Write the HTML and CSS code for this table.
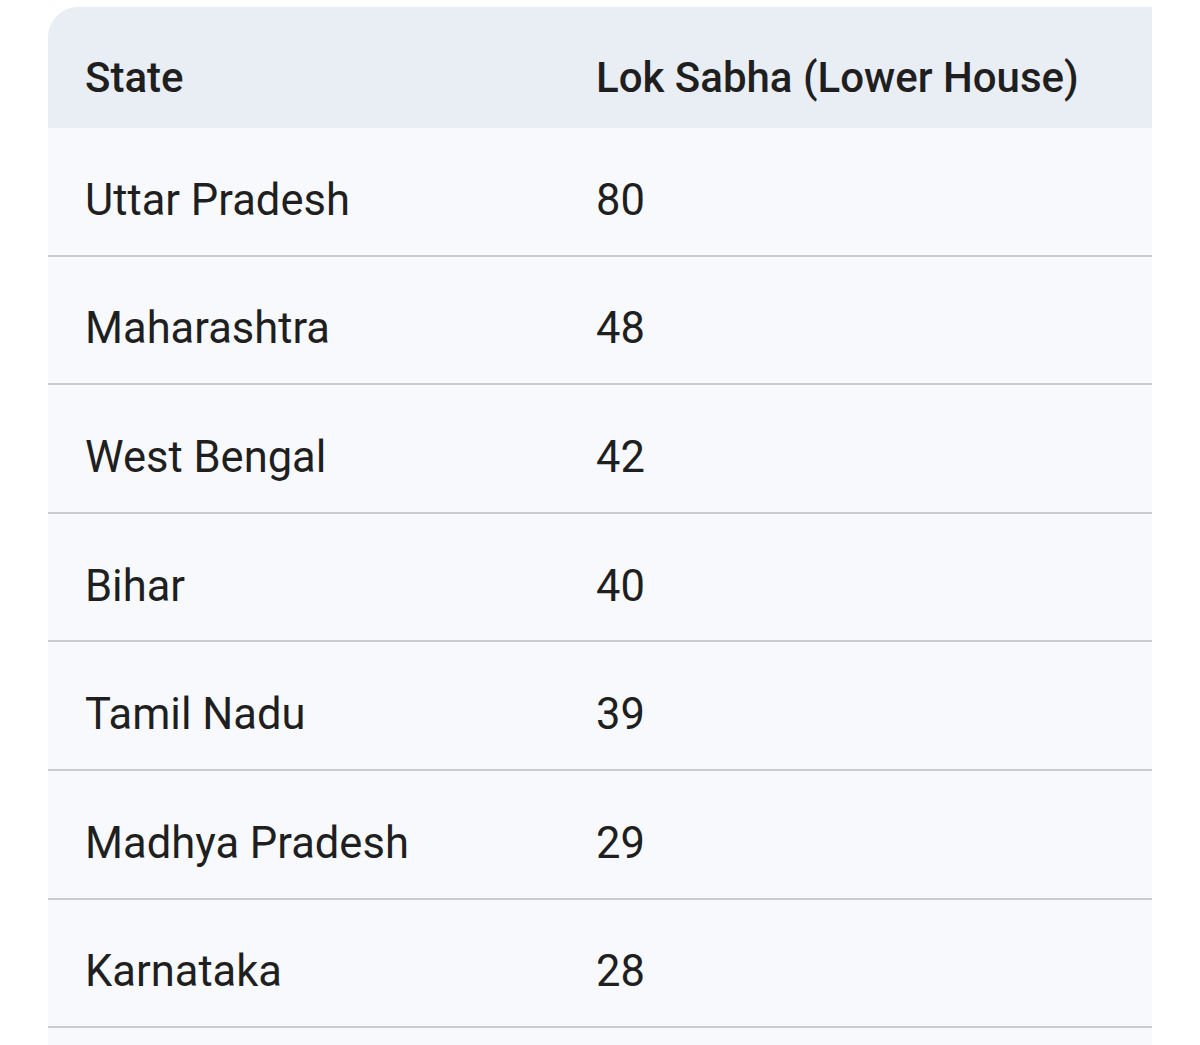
FILE: index.html
```html
<!DOCTYPE html>
<html>
<head>
<meta charset="utf-8">
<link rel="stylesheet" href="styles.css">
</head>
<body>
<div class="page">
  <table class="seats">
    <thead>
      <tr><th class="col-state">State</th><th>Lok Sabha (Lower House)</th></tr>
    </thead>
    <tbody>
      <tr><td>Uttar Pradesh</td><td>80</td></tr>
      <tr><td>Maharashtra</td><td>48</td></tr>
      <tr><td>West Bengal</td><td>42</td></tr>
      <tr><td>Bihar</td><td>40</td></tr>
      <tr><td>Tamil Nadu</td><td>39</td></tr>
      <tr><td>Madhya Pradesh</td><td>29</td></tr>
      <tr><td>Karnataka</td><td>28</td></tr>
      <tr class="empty"><td></td><td></td></tr>
    </tbody>
  </table>
</div>
</body>
</html>
```
FILE: styles.css
```css
html, body {
  margin: 0;
  padding: 0;
  background: #ffffff;
  overflow: hidden;
}
.page {
  padding: 7px 48px 0 48px;
  height: 1045px;
  box-sizing: border-box;
  overflow: hidden;
}
.seats {
  width: 1104px;
  border-collapse: separate;
  border-spacing: 0;
  font-family: Roboto, "Noto Sans", sans-serif;
  color: #1f1f1f;
  table-layout: fixed;
}
.seats th {
  background: #e9edf4;
  height: 121px;
  padding: 20px 0 0 37px;
  text-align: left;
  font-weight: 500;
  font-size: 42px;
  box-sizing: border-box;
  vertical-align: middle;
}
.seats th.col-state {
  width: 548px;
  border-top-left-radius: 30px;
}
.seats th + th {
  padding-left: 0;
}
.seats td {
  background: #f8f9fd;
  height: 128.6px;
  box-sizing: border-box;
  padding: 18px 0 0 37px;
  font-size: 43.5px;
  border-bottom: 2px solid #cbccd0;
  vertical-align: middle;
}
.seats td + td {
  padding-left: 0;
}
```
